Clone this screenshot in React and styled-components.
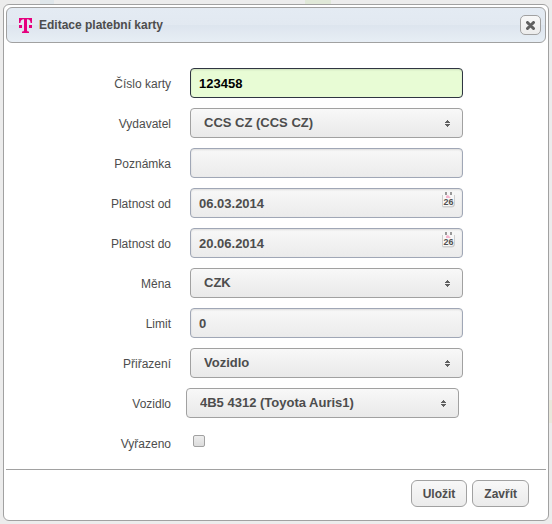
import { useState } from "react";
import styled, { createGlobalStyle } from "styled-components";

const GlobalStyle = createGlobalStyle`
  * {
    box-sizing: border-box;
  }
  body {
    margin: 0;
    background-color: #ececec;
    background-image:
      linear-gradient(#e0e8d8, #e0e8d8),
      linear-gradient(#dfe6ea, #dfe6ea),
      linear-gradient(#e9e8dc, #e9e8dc);
    background-repeat: no-repeat;
    background-size: 26px 4px, 14px 4px, 3px 23px;
    background-position: 305px 0, 40px 0, right 400px;
    color: #4d4d4d;
    font-family: "Liberation Sans", Arial, sans-serif;
    font-size: 12px;
  }
`;

const Page = styled.div`
  padding: 4px 3px 3px;
`;

const Dialog = styled.section`
  padding: 2px;
  background: #fff;
  border: 1px solid #a1a1a1;
  border-radius: 6px;
`;

const TitleBar = styled.header`
  display: flex;
  align-items: center;
  height: 36px;
  padding: 0 4px 0 12px;
  border: 1px solid #a1a1a1;
  border-radius: 6px;
  background: linear-gradient(#e4ebf3 0%, #e2e9f1 50%, #dde5ee 51%, #e7eef5 100%);
`;

const Title = styled.h1`
  flex: 1;
  margin: 0 0 0 7px;
  font-size: 12px;
  font-weight: bold;
`;

const CloseButton = styled.button`
  display: flex;
  align-items: center;
  justify-content: center;
  width: 21px;
  height: 20px;
  padding: 0;
  border: 1px solid #a1a1a1;
  border-radius: 5px;
  background: linear-gradient(#f8f8f8, #ececec);
`;

const Fields = styled.div`
  display: grid;
  gap: 10px;
  padding: 25px 83px 11px 0;
`;

const Row = styled.div`
  display: grid;
  grid-template-columns: 165px minmax(0, 1fr);
  column-gap: 19px;
  align-items: center;
  height: 30px;
`;

const Label = styled.label`
  padding-top: 2px;
  line-height: 16px;
  text-align: right;
`;

const Control = styled.div`
  position: relative;
  margin: ${(props) => (props.$shifted ? "0 4px 0 -4px" : "0")};
`;

const TextInput = styled.input`
  display: block;
  width: 100%;
  height: 30px;
  padding: 0 8px;
  border: 1px solid ${(props) => (props.$active ? "#2f3542" : "#a0a7b6")};
  border-radius: 4px;
  outline: none;
  background: ${(props) =>
    props.$active ? "#e8fcd5" : "linear-gradient(#f8f8f8, #ebebeb)"};
  box-shadow: inset 0 1px 2px rgba(0, 0, 0, 0.12);
  color: ${(props) => (props.$active ? "#000" : "#4d4d4d")};
  font: bold 13px "Liberation Sans", Arial, sans-serif;
`;

const Select = styled.select`
  display: block;
  appearance: none;
  width: 100%;
  height: 30px;
  padding: 0 28px 2px 13px;
  border: 1px solid #a1a1a1;
  border-radius: 4px;
  background: linear-gradient(#f8f8f8, #e9e9e9);
  color: #4d4d4d;
  font: bold 13px "Liberation Sans", Arial, sans-serif;
`;

const ArrowSvg = styled.svg`
  position: absolute;
  top: 12px;
  right: 13px;
  pointer-events: none;
`;

const CalendarSvg = styled.svg`
  position: absolute;
  top: 4px;
  right: 8px;
`;

const Checkbox = styled.input`
  display: block;
  appearance: none;
  width: 12px;
  height: 12px;
  margin: 0 0 5px 3px;
  border: 1px solid #a1a1a1;
  border-radius: 2px;
  background: linear-gradient(#ededed, #dcdcdc);
  &:checked {
    background: #6b6b6b;
  }
`;

const Footer = styled.footer`
  display: flex;
  justify-content: flex-end;
  gap: 5px;
  padding: 10px 17px 11px;
  border-top: 1px solid #a1a1a1;
`;

const Button = styled.button`
  height: 27px;
  padding: 0 11px;
  border: 1px solid #a1a1a1;
  border-radius: 6px;
  background: linear-gradient(#f8f8f8, #ebebeb);
  color: #4d4d4d;
  font: bold 12px "Liberation Sans", Arial, sans-serif;
`;

const Logo = () => (
  <svg width="13" height="15" viewBox="0 0 13 15" fill="#e5007d" aria-hidden="true">
    <path d="M0 0H13V5H11.6C11.5 2.6 10.5 1.3 8 1.2V12C8 13.2 8.6 13.5 10 13.5V15H3V13.5C4.4 13.5 5 13.2 5 12V1.2C2.5 1.3 1.5 2.6 1.4 5H0Z" />
    <path d="M0 7H3V10H0ZM10 7H13V10H10Z" />
  </svg>
);

const Arrows = () => (
  <ArrowSvg width="5" height="7" viewBox="0 0 5 7" fill="#606060" aria-hidden="true">
    <path d="M2 0H3V1H4V2H5V3H0V2H1V1H2ZM0 4H5V5H4V6H3V7H2V6H1V5H0Z" />
  </ArrowSvg>
);

const Calendar = () => (
  <CalendarSvg width="13" height="16" viewBox="0 0 13 16" aria-hidden="true">
    <path d="M0 3H13V13Q12 16 9 15.5H2Q0 15.5 0 14Z" fill="#cfcfcf" />
    <path d="M1 2H12V12Q11 14 9 14H1Z" fill="#f7f7f7" />
    <path d="M3 0H5V3H3ZM8 0H10V3H8Z" fill="#999" />
    <path d="M4 6V4L6 3L9 6Z" fill="#f5b5cd" />
    <text x="6.5" y="12.5" textAnchor="middle" fontSize="9" fontWeight="bold" fill="#505050">
      26
    </text>
  </CalendarSvg>
);

const fields = [
  { id: "number", label: "Číslo karty", type: "text", value: "123458", active: true },
  { id: "issuer", label: "Vydavatel", type: "select", value: "CCS CZ (CCS CZ)" },
  { id: "note", label: "Poznámka", type: "text", value: "" },
  { id: "validFrom", label: "Platnost od", type: "date", value: "06.03.2014" },
  { id: "validTo", label: "Platnost do", type: "date", value: "20.06.2014" },
  { id: "currency", label: "Měna", type: "select", value: "CZK" },
  { id: "limit", label: "Limit", type: "text", value: "0" },
  { id: "assignment", label: "Přiřazení", type: "select", value: "Vozidlo" },
  {
    id: "vehicle",
    label: "Vozidlo",
    type: "select",
    value: "4B5 4312 (Toyota Auris1)",
    shifted: true,
  },
];

const Field = ({ field }) => {
  const [value, setValue] = useState(field.value);
  const onChange = (event) => setValue(event.target.value);

  return (
    <Row>
      <Label htmlFor={field.id}>{field.label}</Label>
      <Control $shifted={field.shifted}>
        {field.type === "select" ? (
          <>
            <Select id={field.id} value={value} onChange={onChange}>
              <option>{field.value}</option>
            </Select>
            <Arrows />
          </>
        ) : (
          <TextInput
            id={field.id}
            type="text"
            value={value}
            onChange={onChange}
            $active={field.active}
          />
        )}
        {field.type === "date" && <Calendar />}
      </Control>
    </Row>
  );
};

const App = () => {
  const [retired, setRetired] = useState(false);

  return (
    <>
      <GlobalStyle />
      <Page>
        <Dialog role="dialog" aria-labelledby="dialog-title">
          <TitleBar>
            <Logo />
            <Title id="dialog-title">Editace platební karty</Title>
            <CloseButton type="button" aria-label="Zavřít">
              <svg width="9" height="9" viewBox="0 0 9 9" aria-hidden="true">
                <path d="M1.5 1.5L7.5 7.5M7.5 1.5L1.5 7.5" stroke="#606060" strokeWidth="3" strokeLinecap="round" />
              </svg>
            </CloseButton>
          </TitleBar>
          <form onSubmit={(event) => event.preventDefault()}>
            <Fields>
              {fields.map((field) => (
                <Field key={field.id} field={field} />
              ))}
              <Row>
                <Label htmlFor="retired">Vyřazeno</Label>
                <Checkbox
                  id="retired"
                  type="checkbox"
                  checked={retired}
                  onChange={(event) => setRetired(event.target.checked)}
                />
              </Row>
            </Fields>
            <Footer>
              <Button type="submit">Uložit</Button>
              <Button type="button">Zavřít</Button>
            </Footer>
          </form>
        </Dialog>
      </Page>
    </>
  );
};

export default App;
